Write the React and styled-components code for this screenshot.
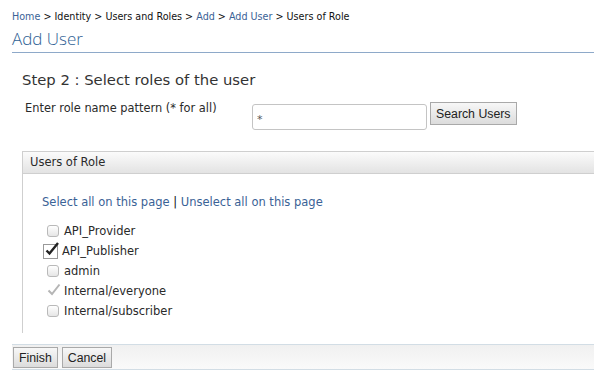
import React from "react";
import styled, { createGlobalStyle } from "styled-components";

const Global = createGlobalStyle`
  html, body { margin: 0; padding: 0; background: #fff; }
  body { font-family: "DejaVu Sans", sans-serif; color: #2a2a2a; overflow: hidden; }
`;

const Page = styled.div`
  width: 594px;
  height: 388px;
  padding: 10px 0 0 12px;
  box-sizing: border-box;
`;

const Crumbs = styled.div`
  font-size: 9.6px;
  color: #111;
  height: 14px;
  line-height: 14px;
`;

const Crumb = styled.a`
  color: ${(p) => (p.$link ? "#3a6296" : "#111")};
  text-decoration: none;
`;

const Title = styled.h1`
  margin: 3px 0 0;
  font-family: "Open Sans", "DejaVu Sans", sans-serif;
  font-weight: 300;
  font-size: 17px;
  color: #2f5f94;
  line-height: 24px;
  padding-bottom: 1px;
  border-bottom: 1px solid #8ea9c9;
`;

const Body = styled.div`
  padding: 0 0 0 10px;
`;

const Step = styled.h2`
  margin: 17px 0 0;
  font-weight: normal;
  font-size: 14.8px;
  color: #333;
  line-height: 20px;
`;

const FormRow = styled.div`
  display: flex;
  align-items: flex-start;
  margin-top: 14px;
  padding-left: 3px;
`;

const Label = styled.div`
  width: 227px;
  font-size: 11.4px;
  color: #2a2a2a;
  line-height: 14px;
  margin-top: -3px;
`;

const Input = styled.input`
  width: 175px;
  height: 26px;
  box-sizing: border-box;
  border: 1px solid #c4c4c4;
  border-radius: 3px;
  font-size: 11px;
  padding: 4px 4px 0;
  color: #555;
  font-family: "DejaVu Sans", sans-serif;
  outline: none;
`;

const Btn = styled.button`
  font-family: "Liberation Sans", Arial, sans-serif;
  font-size: 12.3px;
  color: #222;
  height: ${(p) => p.$h || 23}px;
  padding: 0 5px;
  border: 1px solid #a9a9a9;
  background: linear-gradient(#f7f7f7, #dcdcdc);
  border-radius: 0;
  cursor: pointer;
`;

const SearchBtn = styled(Btn)`
  margin-left: 3px;
  margin-top: -2px;
`;

const Box = styled.div`
  margin-top: 21px;
  border-left: 1px solid #cfcfcf;
  height: 182px;
`;

const BoxHeader = styled.div`
  height: 21px;
  line-height: 21px;
  border-top: 1px solid #cfcfcf;
  border-bottom: 1px solid #cfcfcf;
  background: linear-gradient(#fbfbfb, #e3e3e3);
  font-size: 11.5px;
  padding-left: 7px;
  color: #2a2a2a;
`;

const BoxBody = styled.div`
  padding: 21px 0 0 19px;
`;

const Links = styled.div`
  font-size: 11.5px;
  color: #111;
  line-height: 14px;
`;

const LinkA = styled.a`
  color: #3a6296;
  text-decoration: none;
`;

const List = styled.div`
  margin-top: 12px;
  padding-left: 5px;
  display: flex;
  flex-direction: column;
`;

const Item = styled.label`
  display: flex;
  align-items: center;
  height: 20px;
  font-size: 11.5px;
  color: #2a2a2a;
  gap: 5px;
`;

const Plain = styled.span`
  width: 12px;
  height: 12px;
  box-sizing: border-box;
  border: 1px solid #b9b9b9;
  border-radius: 3px;
  background: linear-gradient(#fff, #e6e6e6);
  display: inline-block;
  flex: none;
`;

const Checked = styled.span`
  width: 15px;
  height: 15px;
  box-sizing: border-box;
  border: 1px solid #999;
  background: #fff;
  position: relative;
  display: inline-block;
  flex: none;
  margin-left: -4px;
  margin-right: -1px;
`;

const Ghost = styled.span`
  width: 12px;
  height: 12px;
  position: relative;
  display: inline-block;
  flex: none;
`;

const Tick = styled.svg`
  position: absolute;
  left: ${(p) => p.$l || 0}px;
  top: ${(p) => p.$t || 0}px;
  overflow: visible;
`;

const Bar = styled.div`
  margin-top: 11px;
  display: flex;
  gap: 4px;
  align-items: center;
  height: 23px;
  padding: 1px 0 0 1px;
  border-top: 1px solid #d2dde5;
  border-bottom: 1px solid #d2dde5;
  background: linear-gradient(#f0f0f0, #fafafa);
`;

const roles = [
  { name: "API_Provider" },
  { name: "API_Publisher", checked: true },
  { name: "admin" },
  { name: "Internal/everyone", disabled: true },
  { name: "Internal/subscriber" },
];

function Check({ checked, disabled }) {
  if (checked) {
    return (
      <Checked>
        <Tick $l={1} $t={-4} width="14" height="16" viewBox="0 0 14 16">
          <path d="M1.5 9.5 L4.5 12.5 L13 2" fill="none" stroke="#222" strokeWidth="2.4" />
        </Tick>
      </Checked>
    );
  }
  if (disabled) {
    return (
      <Ghost>
        <Tick $l={0} $t={-3} width="14" height="14" viewBox="0 0 14 14">
          <path d="M1.5 8.5 L5 12 L12.5 2.5" fill="none" stroke="#b5b5b5" strokeWidth="2" />
        </Tick>
      </Ghost>
    );
  }
  return <Plain />;
}

export default function App() {
  return (
    <Page>
      <Global />
      <Crumbs>
        <Crumb $link href="#">Home</Crumb> &gt; Identity &gt; Users and Roles &gt;{" "}
        <Crumb $link href="#">Add</Crumb> &gt; <Crumb $link href="#">Add User</Crumb> &gt; Users of Role
      </Crumbs>
      <Title>Add User</Title>
      <Body>
        <Step>Step 2 : Select roles of the user</Step>
        <FormRow>
          <Label>Enter role name pattern (* for all)</Label>
          <Input defaultValue="*" />
          <SearchBtn>Search Users</SearchBtn>
        </FormRow>
        <Box>
          <BoxHeader>Users of Role</BoxHeader>
          <BoxBody>
            <Links>
              <LinkA href="#">Select all on this page</LinkA> | <LinkA href="#">Unselect all on this page</LinkA>
            </Links>
            <List>
              {roles.map((r) => (
                <Item key={r.name}>
                  <Check checked={r.checked} disabled={r.disabled} />
                  {r.name}
                </Item>
              ))}
            </List>
          </BoxBody>
        </Box>
      </Body>
      <Bar>
        <Btn $h={21}>Finish</Btn>
        <Btn $h={21}>Cancel</Btn>
      </Bar>
    </Page>
  );
}
